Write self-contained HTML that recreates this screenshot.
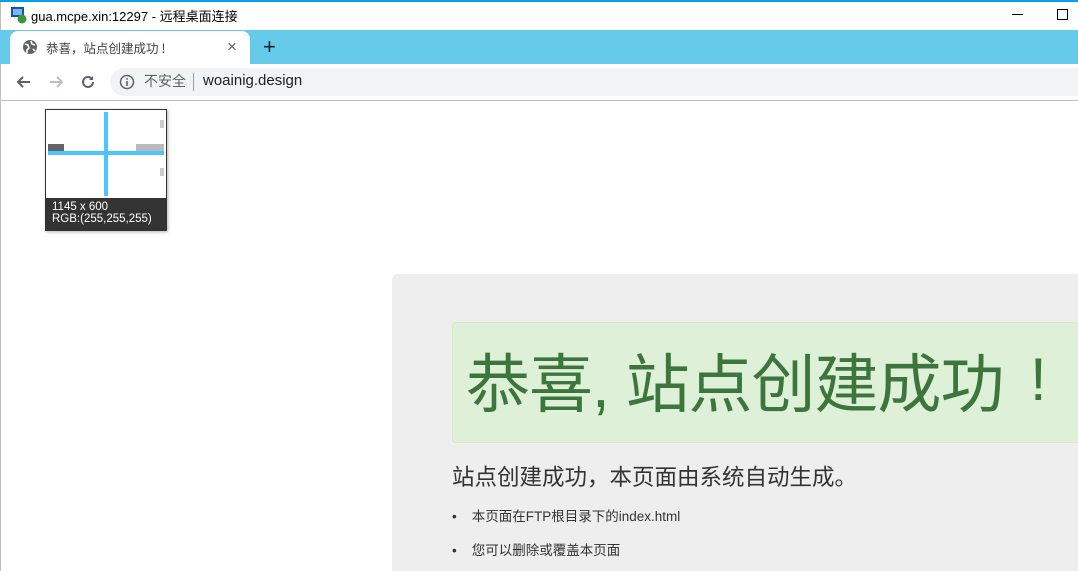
<!DOCTYPE html>
<html><head><meta charset="utf-8"><style>
*{margin:0;padding:0;box-sizing:border-box}
html,body{width:1078px;height:571px;overflow:hidden}
body{background:#fff;font-family:"Liberation Sans","Noto Sans CJK SC",sans-serif;position:relative}
.a{position:absolute}
.c{font-family:"Noto Sans CJK SC","Liberation Sans",sans-serif}
</style></head><body>
<div class="a" style="left:0;top:0;width:1078px;height:2px;background:#00a2ed"></div>
<div class="a" style="left:0;top:2px;width:1px;height:569px;background:#c0c0c0"></div>
<svg class="a" style="left:10px;top:6px" width="18" height="18"><rect x="1" y="1" width="13" height="10" fill="#1c4fb0"/><rect x="3" y="3" width="9" height="6" fill="#7ab8f0"/><circle cx="12" cy="13" r="4.5" fill="#3a9a3a"/></svg>
<div class="a" style="left:31px;top:6px;font-size:13px;color:#000">gua.mcpe.xin:12297 - 远程桌面连接</div>
<div class="a" style="left:1012px;top:14px;width:11px;height:1px;background:#000"></div>
<div class="a" style="left:1057px;top:9px;width:11px;height:11px;border:1px solid #000"></div>
<div class="a" style="left:0;top:30px;width:1078px;height:34px;background:#66cbea"></div>
<div class="a" style="left:10px;top:31px;width:240px;height:34px;background:#fff;border-radius:8px 8px 0 0"></div>
<svg class="a" style="left:22px;top:39px" width="16" height="16" viewBox="0 0 16 16"><circle cx="8" cy="8" r="7" fill="#5f6368"/><path d="M3 5l3 1 1 3-2 2v3M9 2l1 3 3 1M11 10l2 2" stroke="#fff" stroke-width="1.6" fill="none"/></svg>
<div class="a c" style="left:46px;top:38px;font-size:12.5px;color:#3c4043">恭喜，站点创建成功<span style="margin-left:3px">!</span></div>
<div class="a" style="left:227px;top:37px;font-size:17px;color:#5f6368">×</div>
<div class="a" style="left:263px;top:34px;font-size:22px;color:#202124">+</div>
<svg class="a" style="left:14px;top:72px" width="20" height="20" viewBox="0 0 20 20"><path d="M16 10H4M9 5l-5 5 5 5" stroke="#5f6368" stroke-width="2" fill="none"/></svg>
<svg class="a" style="left:46px;top:72px" width="20" height="20" viewBox="0 0 20 20"><path d="M4 10h12M11 5l5 5-5 5" stroke="#bdc1c6" stroke-width="2" fill="none"/></svg>
<svg class="a" style="left:78px;top:72px" width="20" height="20" viewBox="0 0 20 20"><path d="M15 10a5 5 0 1 1-1.5-3.6" stroke="#5f6368" stroke-width="2" fill="none"/><path d="M15 4v4h-4z" fill="#5f6368"/></svg>
<div class="a" style="left:110px;top:68px;width:968px;height:28px;background:#f1f3f4;border-radius:14px 0 0 14px"></div>
<svg class="a" style="left:119px;top:74px" width="16" height="16" viewBox="0 0 16 16"><circle cx="8" cy="8" r="6.5" stroke="#5f6368" stroke-width="1.5" fill="none"/><rect x="7.2" y="7" width="1.6" height="5" fill="#5f6368"/><rect x="7.2" y="4" width="1.6" height="1.6" fill="#5f6368"/></svg>
<div class="a c" style="left:144px;top:71px;font-size:14px;color:#5f6368">不安全</div>
<div class="a" style="left:193px;top:73px;width:1px;height:18px;background:#9aa0a6"></div>
<div class="a" style="left:203px;top:72px;font-size:15px;color:#202124">woainig.design</div>
<div class="a" style="left:0;top:100px;width:1078px;height:1px;background:#bdbdbd"></div>
<div class="a" style="left:45px;top:109px;width:122px;height:122px;background:#fff;border:1px solid #333;box-shadow:1px 1px 3px rgba(0,0,0,.3)"></div>
<div class="a" style="left:104px;top:112px;width:4px;height:84px;background:#4cc4ff"></div>
<div class="a" style="left:48px;top:151px;width:116px;height:4px;background:#4cc4ff"></div>
<div class="a" style="left:48px;top:144px;width:16px;height:7px;background:#636468"></div>
<div class="a" style="left:136px;top:144px;width:28px;height:7px;background:#bbb"></div>
<div class="a" style="left:160px;top:120px;width:4px;height:8px;background:#ccc"></div>
<div class="a" style="left:160px;top:168px;width:4px;height:8px;background:#ccc"></div>
<div class="a" style="left:46px;top:198px;width:120px;height:32px;background:#333;color:#fff;font-size:11.5px;line-height:12px;padding:3px 0 0 6px">1145 x 600<br>RGB:(255,255,255)</div>
<div class="a" style="left:392px;top:274px;width:700px;height:300px;background:#eee;border-radius:6px"></div>
<div class="a" style="left:452px;top:322px;width:640px;height:121px;background:#dff0d8;border:1px solid #d6e9c6;border-radius:4px"></div>
<div class="a" style="left:466px;top:338px;font-size:64px;line-height:84px;color:#3c763d;white-space:nowrap;letter-spacing:-1px">恭喜<span style="font-family:'Liberation Sans'">,</span> <span class="c">站点创建成功</span></div>
<div class="a" style="left:1030px;top:338px;font-size:60px;line-height:84px;color:#3c763d;font-family:'Liberation Sans',sans-serif">!</div>
<div class="a c" style="left:452px;top:460px;font-size:22.5px;line-height:32px;color:#333;white-space:nowrap">站点创建成功，本页面由系统自动生成。</div>
<div class="a" style="left:452px;top:505px;font-size:13.5px;color:#333;white-space:nowrap">•&nbsp;&nbsp;&nbsp;&nbsp;本页面在FTP根目录下的index.html</div>
<div class="a" style="left:452px;top:539px;font-size:13.5px;color:#333;white-space:nowrap">•&nbsp;&nbsp;&nbsp;&nbsp;您可以删除或覆盖本页面</div>
</body></html>
